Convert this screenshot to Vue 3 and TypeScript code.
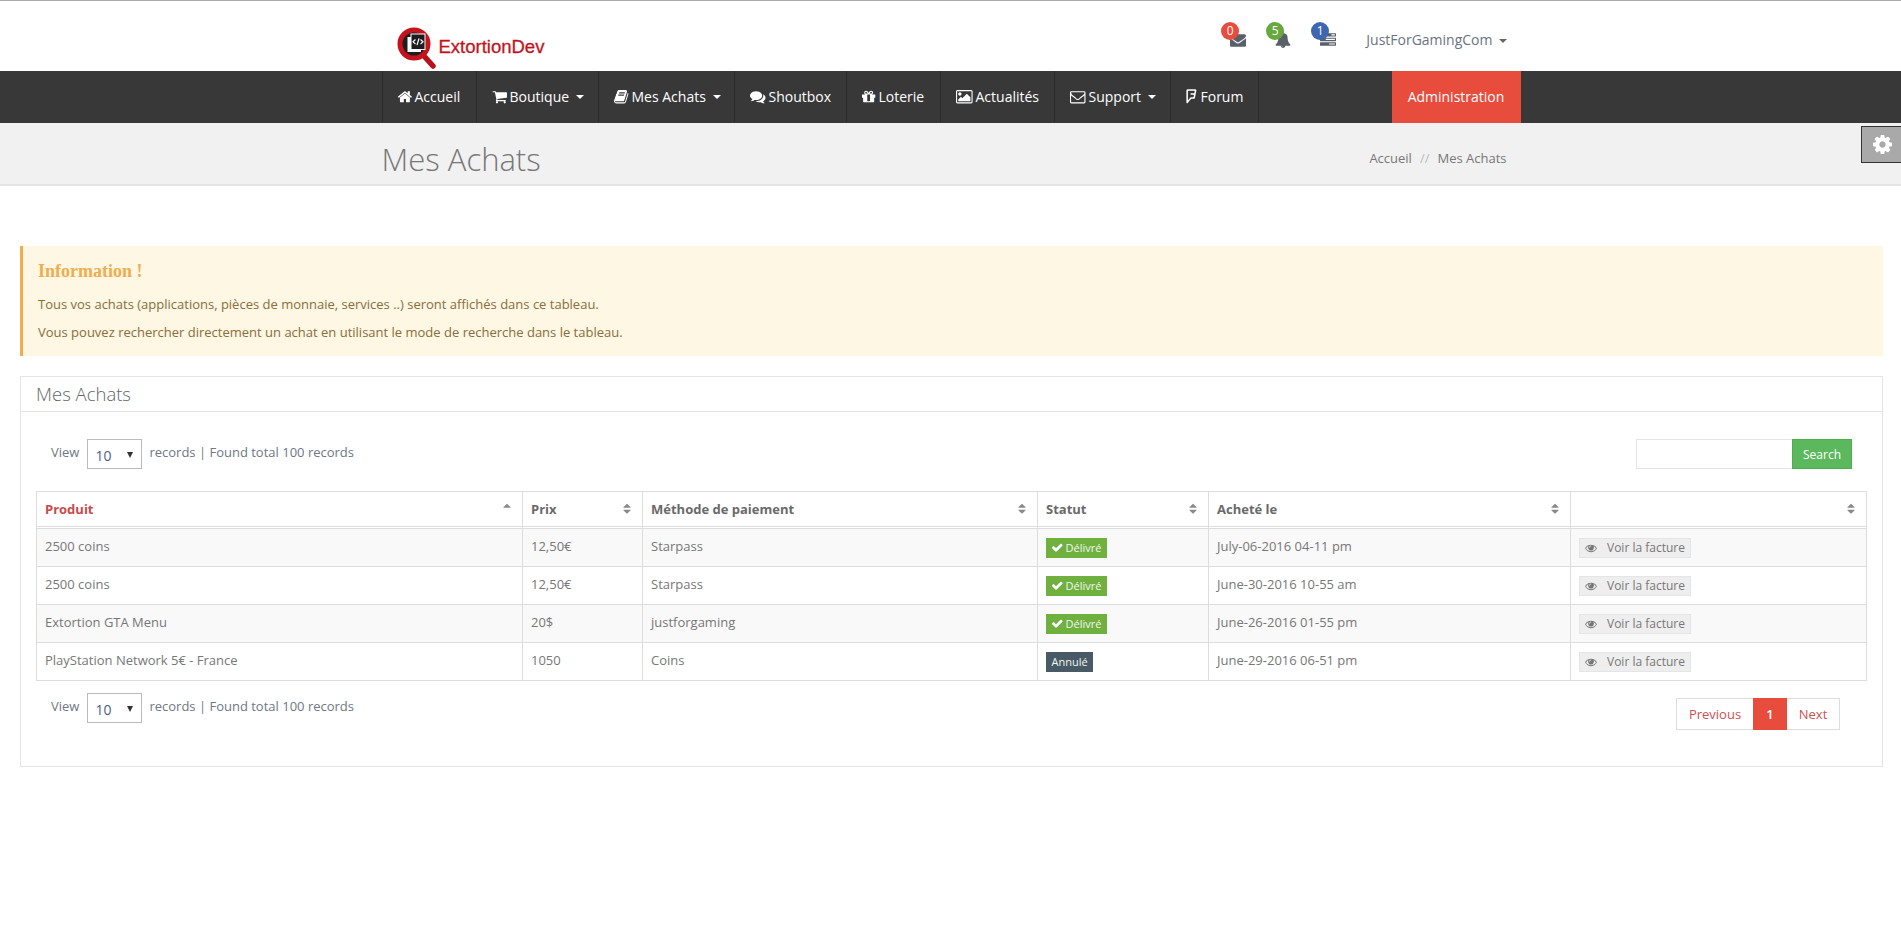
<script setup lang="ts">
const P: Record<string, string> = {
  home: 'M1472 992v480q0 26-19 45t-45 19h-384v-384h-256v384h-384q-26 0-45-19t-19-45v-480q0-1 .5-3t.5-3l575-474 575 474q1 2 1 6zm223-69l-62 74q-8 9-21 11h-3q-13 0-21-7l-692-577-692 577q-12 8-24 7-13-2-21-11l-62-74q-8-10-7-23.500t11-21.500l719-599q32-26 76-26t76 26l244 204v-195q0-14 9-23t23-9h192q14 0 23 9t9 23v408l219 182q10 8 11 21.500t-7 23.500z',
  cart: 'M704 1536q0 52-38 90t-90 38-90-38-38-90 38-90 90-38 90 38 38 90zm896 0q0 52-38 90t-90 38-90-38-38-90 38-90 90-38 90 38 38 90zm128-1088v512q0 24-16.500 42.500t-40.500 21.500l-1044 122q13 60 13 70 0 16-24 64h920q26 0 45 19t19 45-19 45-45 19h-1024q-26 0-45-19t-19-45q0-11 8-31.500t16-36 21.500-40 15.500-29.500l-177-823h-204q-26 0-45-19t-19-45 19-45 45-19h256q16 0 28.500 6.500t19.500 15.500 13 24.500 8 26 5.500 29.500 4.500 26h1201q26 0 45 19t19 45z',
  book: 'M1703 478q40 57 18 129l-275 906q-19 64-76.500 107.500t-122.500 43.500h-923q-77 0-148.500-53.500t-99.500-131.500q-24-67-2-127 0-4 3-27t4-37q1-8-3-21.500t-3-19.500q2-11 8-21t16.500-23.500 16.500-23.500q23-38 45-91.500t30-91.500q3-10 .5-30t-.5-28q3-11 17-28t17-23q21-36 42-92t25-90q1-9-2.500-32t.5-28q4-13 22-30.500t22-22.500q19-26 42.500-84.500t27.500-96.500q1-8-3-25.500t-2-26.500q2-8 9-18t18-23 17-21q8-12 16.500-30.500t15-35 16-36 19.500-32 26.500-23.500 36-11.500 47.500 5.500l-1 3q38-9 51-9h761q74 0 114 56t18 130l-274 906q-36 119-71.500 153.500t-128.500 34.500h-869q-27 0-38 15-11 16-1 43 24 70 144 70h923q29 0 56-15.500t35-41.500l300-987q7-22 5-57 38 15 59 43zm-1064 2q-4 13 2 22.500t20 9.500h608q13 0 25.500-9.500t16.500-22.500l21-64q4-13-2-22.500t-20-9.500h-608q-13 0-25.500 9.500t-16.500 22.500zm-83 256q-4 13 2 22.500t20 9.500h608q13 0 25.500-9.500t16.500-22.500l21-64q4-13-2-22.500t-20-9.500h-608q-13 0-25.500 9.500t-16.500 22.500z',
  comments: 'M1408 768q0 139-94 257t-256.500 186.500-353.500 68.500q-86 0-176-16-124 88-278 128-36 9-86 16h-3q-11 0-20.500-8t-11.500-21q-1-3-1-6.500t.5-6.500 2-6l2.500-5 3.500-5.500 4-5 4.500-5 4-4.500q5-6 23-25t26-29.500 22.500-29 25-38.500 20.500-44q-124-72-195-177t-71-224q0-139 94-257t256.500-186.500 353.500-68.500 353.500 68.500 256.500 186.500 94 257zm384 256q0 120-71 224.500t-195 176.500q10 24 20.500 44t25 38.500 22.500 29 26 29.500 23 25q1 1 4 4.500t4.500 5 4 5 3.500 5.500l2.500 5 2 6 .5 6.500-1 6.500q-3 14-13 22t-22 7q-50-7-86-16-154-40-278-128-90 16-176 16-271 0-472-132 58 4 88 4 161 0 309-45t264-129q125-92 192-212t67-254q0-77-23-152 129 71 204 178t75 230z',
  gift: 'M1056 1356v-716h-320v716q0 25 18 38.500t46 13.500h192q28 0 46-13.500t18-38.500zm-456-844h195l-126-161q-26-31-69-31-40 0-68 28t-28 68 28 68 68 28zm688-96q0-40-28-68t-68-28q-43 0-69 31l-125 161h194q40 0 68-28t28-68zm376 256v320q0 14-9 23t-23 9h-96v416q0 40-28 68t-68 28h-1088q-40 0-68-28t-28-68v-416h-96q-14 0-23-9t-9-23v-320q0-14 9-23t23-9h440q-93 0-158.500-65.500t-65.500-158.500 65.500-158.500 158.500-65.500q107 0 168 77l128 165 128-165q61-77 168-77 93 0 158.500 65.500t65.500 158.500-65.500 158.500-158.500 65.500h440q14 0 23 9t9 23z',
  picture: 'M640 576q0 80-56 136t-136 56-136-56-56-136 56-136 136-56 136 56 56 136zm1024 384v448h-1408v-192l320-320 160 160 512-512zm96-704h-1600q-13 0-22.500 9.500t-9.500 22.500v1216q0 13 9.500 22.500t22.500 9.500h1600q13 0 22.500-9.500t9.500-22.500v-1216q0-13-9.500-22.500t-22.500-9.500zm160 32v1216q0 66-47 113t-113 47h-1600q-66 0-113-47t-47-113v-1216q0-66 47-113t113-47h1600q66 0 113 47t47 113z',
  envo: 'M1664 1504v-768q-32 36-69 66-268 206-426 338-51 43-83 67t-86.500 48.500-102.500 24.500h-2q-48 0-102.500-24.500t-86.500-48.500-83-67q-158-132-426-338-37-30-69-66v768q0 13 9.500 22.500t22.500 9.500h1472q13 0 22.500-9.500t9.500-22.500zm0-1051v-24.500l-.5-13-3-12.500-5.500-9-9-7.500-14-2.500h-1472q-13 0-22.500 9.500t-9.500 22.500q0 168 147 284 193 152 401 317 6 5 35 29.500t46 37.500 44.500 31.500 50.500 27.500 43 9h2q20 0 43-9t50.500-27.500 44.500-31.500 46-37.500 35-29.500q208-165 401-317 54-43 100.500-115.500t46.500-131.500zm128-37v1088q0 66-47 113t-113 47h-1472q-66 0-113-47t-47-113v-1088q0-66 47-113t113-47h1472q66 0 113 47t47 113z',
  foursquare: 'M1258 308l37-194q5-23-9-40t-35-17h-712q-23 0-38.500 17t-15.500 37v1101q0 7 6 1l291-352q23-26 38-33.500t48-7.500h239q22 0 37-14.500t18-29.500q24-130 37-191 4-21-11.500-40t-36.500-19h-294q-29 0-48-19t-19-48v-42q0-29 19-47.500t48-18.500h346q18 0 35-13.500t20-29.500zm227-222q-15 73-53.500 266.500t-69.500 350-35 173.500q-6 22-9 32.500t-14 32.500-24.500 33-38.500 21-58 10h-271q-13 0-22 10-8 9-426 494-22 25-58.500 28.500t-48.500-5.500q-55-22-55-98v-1410q0-55 38-102.500t120-47.500h888q95 0 127 53t10 159z',
  check: 'M1671 566q0 40-28 68l-724 724-136 136q-28 28-68 28t-68-28l-136-136-362-362q-28-28-28-68t28-68l136-136q28-28 68-28t68 28l294 295 656-657q28-28 68-28t68 28l136 136q28 28 28 68z',
  eye: 'M1664 960q-152-236-381-353 61 104 61 225 0 185-131.500 316.500t-316.500 131.500-316.500-131.500-131.500-316.500q0-121 61-225-229 117-381 353 133 205 333.500 326.500t434.500 121.500 434.500-121.500 333.500-326.500zm-720-384q0-20-14-34t-34-14q-125 0-214.500 89.500t-89.500 214.500q0 20 14 34t34 14 34-14 14-34q0-86 61-147t147-61q20 0 34-14t14-34zm848 384q0 34-20 69-140 230-376.500 368.500t-499.500 138.500-499.500-139-376.500-368q-20-35-20-69t20-69q140-229 376.500-368t499.500-139 499.500 139 376.500 369q20 34 20 69z',
  bell: 'M912 1696q0-16-16-16-59 0-101.500-42.500t-42.500-101.500q0-16-16-16t-16 16q0 73 51.500 124.500t124.500 51.500q16 0 16-16zm816-288q0 52-38 90t-90 38h-448q0 106-75 181t-181 75-181-75-75-181h-448q-52 0-90-38t-38-90q50-42 91-88t85-119.500 74.500-158.500 50-206 19.500-260q0-152 117-282.500t307-158.500q-8-19-8-39 0-40 28-68t68-28 68 28 28 68q0 20-8 39 190 28 307 158.500t117 282.500q0 139 19.500 260t50 206 74.500 158.500 85 119.500 91 88z',
  envelope: 'M1792 710v794q0 66-47 113t-113 47h-1472q-66 0-113-47t-47-113v-794q44 49 101 87 362 246 497 345 57 42 92.500 65.500t94.500 48 110 24.500h2q51 0 110-24.500t94.500-48 92.500-65.500q170-123 498-345 57-39 100-87zm0-294q0 79-49 151t-122 123q-376 261-468 325-10 7-42.500 30.500t-54 38-52 32.500-57.500 27-50 9h-2q-23 0-50-9t-57.500-27-52-32.500-54-38-42.500-30.500q-91-64-262-182.500t-205-142.500q-62-42-117-115.500t-55-136.500q0-78 41.500-130t118.500-52h1472q65 0 112.500 47t47.500 113z',
  tasks: 'M1024 1408h640v-128h-640v128zm-384-512h1024v-128h-1024v128zm640-512h384v-128h-384v128zm512 832v256q0 26-19 45t-45 19h-1664q-26 0-45-19t-19-45v-256q0-26 19-45t45-19h1664q26 0 45 19t19 45zm0-512v256q0 26-19 45t-45 19h-1664q-26 0-45-19t-19-45v-256q0-26 19-45t45-19h1664q26 0 45 19t19 45zm0-512v256q0 26-19 45t-45 19h-1664q-26 0-45-19t-19-45v-256q0-26 19-45t45-19h1664q26 0 45 19t19 45z',
  gear: 'M1152 896q0-106-75-181t-181-75-181 75-75 181 75 181 181 75 181-75 75-181zm512-109v222q0 12-8 23t-20 13l-185 28q-19 54-39 91 35 50 107 138 10 12 10 25t-9 23q-27 37-99 108t-94 71q-12 0-26-9l-138-108q-44 23-91 38-16 136-29 186-7 28-36 28h-222q-14 0-24.500-8.500t-11.500-21.500l-28-184q-49-16-90-37l-141 107q-10 9-25 9-14 0-25-11-126-114-165-168-7-10-7-23 0-12 8-23 15-21 51-66.500t54-70.500q-27-50-41-99l-183-27q-13-2-21-12.500t-8-23.500v-222q0-12 8-23t19-13l186-28q14-46 39-92-40-57-107-138-10-12-10-24 0-10 9-23 26-36 98.500-107.500t94.500-71.500q13 0 26 10l138 107q44-23 91-38 16-136 29-186 7-28 36-28h222q14 0 24.500 8.500t11.500 21.500l28 184q49 16 90 37l142-107q9-9 24-9 13 0 25 10 129 119 165 170 7 8 7 22 0 12-8 23-15 21-51 66.500t-54 70.500q26 50 41 98l183 28q13 2 21 12.500t8 23.500z',
  sort: 'M1408 1088q0 26-19 45l-448 448q-19 19-45 19t-45-19l-448-448q-19-19-19-45t19-45 45-19h896q26 0 45 19t19 45zm0-384q0 26-19 45t-45 19h-896q-26 0-45-19t-19-45 19-45l448-448q19-19 45-19t45 19l448 448q19 19 19 45z',
  sortAsc: 'M1408 704q0 26-19 45t-45 19h-896q-26 0-45-19t-19-45 19-45l448-448q19-19 45-19t45 19l448 448q19 19 19 45z'
}

interface NavItem { label: string; icon: string; caret?: boolean; vb: string; slot: number; width: number }
const navItems: NavItem[] = [
  { label: 'Accueil', icon: 'home', vb: '96 0 1792 1792', slot: 17, width: 94 },
  { label: 'Boutique', icon: 'cart', caret: true, vb: '0 0 1792 1792', slot: 18, width: 122 },
  { label: 'Mes Achats', icon: 'book', caret: true, vb: '64 0 1792 1792', slot: 18, width: 136 },
  { label: 'Shoutbox', icon: 'comments', vb: '0 0 1792 1792', slot: 19, width: 112 },
  { label: 'Loterie', icon: 'gift', vb: '128 0 1792 1792', slot: 17, width: 94 },
  { label: 'Actualités', icon: 'picture', vb: '0 0 1920 1792', slot: 20, width: 114 },
  { label: 'Support', icon: 'envo', caret: true, vb: '0 0 1792 1792', slot: 19, width: 116 },
  { label: 'Forum', icon: 'foursquare', vb: '256 -128 1792 1792', slot: 15, width: 88 }
]

const notifications = [
  { count: 0, color: 'red', icon: 'envelope' },
  { count: 5, color: 'green', icon: 'bell' },
  { count: 1, color: 'blue', icon: 'tasks' }
]

const columns = [
  { label: 'Produit', width: 487, active: true },
  { label: 'Prix', width: 120 },
  { label: 'Méthode de paiement', width: 395 },
  { label: 'Statut', width: 171 },
  { label: 'Acheté le', width: 362 },
  { label: '', width: 296 }
]

const rows = [
  { name: '2500 coins', price: '12,50€', method: 'Starpass', ok: true, date: 'July-06-2016 04-11 pm' },
  { name: '2500 coins', price: '12,50€', method: 'Starpass', ok: true, date: 'June-30-2016 10-55 am' },
  { name: 'Extortion GTA Menu', price: '20$', method: 'justforgaming', ok: true, date: 'June-26-2016 01-55 pm' },
  { name: 'PlayStation Network 5€ - France', price: '1050', method: 'Coins', ok: false, date: 'June-29-2016 06-51 pm' }
]
</script>

<template>
  <div class="page">
    <header class="top">
      <div class="wrap top-inner">
        <div class="logo">
          <svg class="logo-mark" viewBox="0 0 42 42" width="42" height="42">
            <path d="M27 29l9 10" stroke="#b5121b" stroke-width="5.500" stroke-linecap="round" fill="none" />
            <circle cx="17" cy="17" r="14" fill="#1d1d1f" stroke="#c5121c" stroke-width="5" />
            <rect x="10.500" y="10" width="13.500" height="15" fill="#fff" />
            <rect x="14" y="7" width="14" height="15.500" fill="#1d1d1f" stroke="#fff" stroke-width="1" />
            <path d="M18.500 12.500l-2.500 2.300 2.500 2.300M23.500 12.500l2.500 2.300-2.500 2.300M22 11.500l-2 6.600" stroke="#fff" stroke-width="1.200" fill="none" />
          </svg>
          <span class="logo-text">ExtortionDev</span>
        </div>
        <div class="top-right">
          <div v-for="n in notifications" :key="n.icon" class="notif">
            <svg class="notif-icon" viewBox="0 0 1792 1792"><path :d="P[n.icon]" /></svg>
            <span class="bubble" :class="n.color">{{ n.count }}</span>
          </div>
          <div class="user">JustForGamingCom<i class="caret dark"></i></div>
        </div>
      </div>
    </header>

    <nav class="nav">
      <div class="wrap nav-inner">
        <ul class="menu">
          <li v-for="item in navItems" :key="item.label" class="menu-item" :style="{ width: item.width + 'px' }">
            <span class="icon-slot" :style="{ width: item.slot + 'px' }">
              <svg class="nav-icon" :viewBox="item.vb" preserveAspectRatio="xMinYMid meet"><path :d="P[item.icon]" /></svg>
            </span>
            <span>{{ item.label }}</span>
            <i v-if="item.caret" class="caret"></i>
          </li>
        </ul>
        <a class="admin">Administration</a>
      </div>
    </nav>

    <section class="title-band">
      <div class="wrap title-inner">
        <h1>Mes Achats</h1>
        <div class="crumbs"><span>Accueil</span><em>//</em><span>Mes Achats</span></div>
      </div>
      <div class="settings">
        <svg viewBox="128 128 1536 1536"><path :d="P.gear" /></svg>
      </div>
    </section>

    <main class="content">
      <div class="alert">
        <h4>Information !</h4>
        <p>Tous vos achats (applications, pièces de monnaie, services ..) seront affichés dans ce tableau.</p>
        <p>Vous pouvez rechercher directement un achat en utilisant le mode de recherche dans le tableau.</p>
      </div>

      <div class="panel">
        <div class="panel-head">Mes Achats</div>
        <div class="panel-body">
          <div class="toolbar">
            <div class="lengths">
              <span>View</span>
              <span class="select-wrap"><select class="select"><option>10</option></select></span>
              <span>records | Found total 100 records</span>
            </div>
            <div class="search">
              <input class="search-input" type="text" />
              <button class="search-btn">Search</button>
            </div>
          </div>

          <table class="table">
            <colgroup>
              <col v-for="c in columns" :key="c.label" :style="{ width: c.width + 'px' }" />
            </colgroup>
            <thead>
              <tr>
                <th v-for="c in columns" :key="c.label" :class="{ active: c.active }">
                  <div class="th-inner">
                    <span>{{ c.label }}</span>
                    <svg class="sort" viewBox="320 128 1152 1536"><path :d="c.active ? P.sortAsc : P.sort" /></svg>
                  </div>
                </th>
              </tr>
            </thead>
            <tbody>
              <tr v-for="(r, i) in rows" :key="i">
                <td>{{ r.name }}</td>
                <td>{{ r.price }}</td>
                <td>{{ r.method }}</td>
                <td>
                  <span v-if="r.ok" class="label ok">
                    <svg viewBox="128 256 1600 1280"><path :d="P.check" /></svg>Délivré
                  </span>
                  <span v-else class="label ko">Annulé</span>
                </td>
                <td>{{ r.date }}</td>
                <td>
                  <a class="bill">
                    <svg viewBox="0 128 1792 1536"><path :d="P.eye" /></svg>Voir la facture
                  </a>
                </td>
              </tr>
            </tbody>
          </table>

          <div class="foot">
            <div class="lengths">
              <span>View</span>
              <span class="select-wrap"><select class="select"><option>10</option></select></span>
              <span>records | Found total 100 records</span>
            </div>
            <div class="pager">
              <a class="prev">Previous</a>
              <a class="current">1</a>
              <a class="next">Next</a>
            </div>
          </div>
        </div>
      </div>
    </main>
  </div>
</template>

<style>
html, body { margin: 0; background: #fff; }
</style>

<style scoped>
.page { font-family: "Open Sans", "Liberation Sans", sans-serif; font-size: 13px; color: #777; min-height: 949px; background: #fff; }
.wrap { width: 1140px; margin: 0 auto; padding: 0 0 0 1px; box-sizing: border-box; }

.top { height: 70px; border-top: 1px solid #aaa; box-sizing: content-box; }
.top-inner { display: flex; justify-content: space-between; height: 70px; position: relative; }
.logo { display: flex; align-items: flex-start; padding: 26px 0 0 15px; }
.logo-mark { display: block; flex: none; }
.logo-text { font-family: "Liberation Sans", Arial, sans-serif; font-size: 18.500px; color: #c3141d; -webkit-text-stroke: 0.3px #c3141d; margin: 8px 0 0 0; line-height: 24px; }
.top-right { display: flex; align-items: flex-start; padding-right: 14px; }
.notif { position: relative; width: 16px; height: 16px; margin-top: 31px; margin-right: 29px; }
.notif-icon { display: block; width: 16px; height: 16px; fill: #5a6068; }
.bubble { position: absolute; left: -9px; top: -10px; width: 18px; height: 18px; border-radius: 50%; color: #fff; font-size: 12px; line-height: 18px; text-align: center; }
.bubble.red { background: #e74c3c; }
.bubble.green { background: #69a83f; }
.bubble.blue { background: #3f67b1; }
.user { font-size: 14px; color: #6b7280; margin: 29px 0 0 1px; line-height: 20px; white-space: nowrap; }

.caret { display: inline-block; width: 0; height: 0; margin-left: 6px; vertical-align: middle; border-top: 4px solid #fff; border-left: 4px solid transparent; border-right: 4px solid transparent; }
.caret.dark { border-top-color: #666; }

.nav { background: #383838; height: 52px; }
.nav-inner { display: flex; height: 52px; position: relative; }
.menu { display: flex; list-style: none; margin: 0; padding: 0; height: 51px; border-right: 1px solid #2b2b2b; }
.menu-item { display: flex; align-items: center; box-sizing: border-box; padding-left: 15px; border-left: 1px solid #2b2b2b; color: #fff; font-size: 14px; white-space: nowrap; }
.menu-item .caret { margin-left: 7px; }
.icon-slot { display: block; flex: none; height: 15.500px; }
.nav-icon { display: block; width: 100%; height: 15.500px; fill: #fff; overflow: visible; }
.admin { margin-left: auto; width: 129px; background: #e74c3c; color: #fff; font-size: 14px; line-height: 52px; text-align: center; }

.title-band { height: 61px; background: #f1f1f1; border-bottom: 2px solid #e5e5e5; position: relative; }
.title-inner { display: flex; justify-content: space-between; align-items: center; height: 61px; padding-right: 14px; }
.title-band h1 { margin: 0; font-weight: 300; font-size: 31px; line-height: 40px; color: #777; padding-top: 10px; }
.crumbs { display: flex; gap: 8px; color: #777; font-size: 13px; padding-top: 9px; }
.crumbs em { font-style: normal; color: #bbb; }
.settings { position: absolute; top: 3px; right: 0; width: 39px; height: 35px; box-sizing: content-box; background: #a9a9a9; border: 1px solid #333; border-right: 0; display: flex; align-items: center; justify-content: center; }
.settings svg { width: 19px; height: 19px; fill: #fff; margin-left: 2px; }

.content { padding: 60px 18px 0 20px; }
.alert { height: 110px; box-sizing: border-box; background: #fdf7e3; border-left: 3px solid #f0ad4e; padding: 15px 0 0 15px; color: #8a6d3b; }
.alert h4 { margin: 0 0 14px; font-family: "Liberation Serif", "Times New Roman", serif; font-size: 18px; font-weight: 700; line-height: 20px; color: #f0ad4e; }
.alert p { margin: 0 0 10px; line-height: 18px; font-size: 13px; }

.panel { margin-top: 20px; border: 1px solid #e5e5e5; height: 391px; box-sizing: border-box; }
.panel-head { height: 35px; box-sizing: border-box; border-bottom: 1px solid #e5e5e5; padding-left: 15px; font-size: 18.500px; font-weight: 300; line-height: 34px; color: #666; }
.panel-body { padding: 27px 15px 0; }

.toolbar { display: flex; justify-content: space-between; padding: 0 15px 0 15px; height: 30px; margin-bottom: 22px; }
.lengths { display: flex; align-items: flex-start; gap: 7px; color: #6f7782; line-height: 26px; }
.select-wrap { position: relative; display: block; width: 55px; height: 30px; margin-left: 1px; }
.select-wrap::after { content: ""; position: absolute; right: 9px; top: 13px; border-top: 6px solid #333; border-left: 3px solid transparent; border-right: 3px solid transparent; pointer-events: none; }
.select { appearance: none; width: 55px; height: 30px; box-sizing: border-box; border: 1px solid #bbb; background: #fff; padding: 2px 0 0 7px; font-family: inherit; font-size: 14px; color: #4f5d85; border-radius: 0; margin: 0; display: block; }
.search { display: flex; }
.search-input { width: 156px; height: 30px; box-sizing: border-box; border: 1px solid #e5e5e5; border-right: 0; background: #fff; padding: 0; margin: 0; border-radius: 0; }
.search-btn { width: 60px; height: 30px; box-sizing: border-box; border: 1px solid #4cae4c; background: #5cb85c; color: #fff; font-family: inherit; font-size: 12px; padding: 0; border-radius: 0; }

.table { width: 1831px; table-layout: fixed; border-collapse: separate; border-spacing: 0; }
th, td { border-right: 1px solid #ddd; padding: 0 7px 0 8px; text-align: left; box-sizing: border-box; }
th:first-child, td:first-child { border-left: 1px solid #ddd; }
th { border-top: 1px solid #ddd; border-bottom: 3px double #ddd; height: 38px; font-weight: 700; font-size: 13px; color: #6a6a6a; }
th.active { color: #c94a4c; }
.th-inner { display: flex; align-items: center; justify-content: space-between; padding-right: 4px; padding-bottom: 1px; }
.sort { width: 8px; height: 11.500px; fill: #8a8a8a; flex: none; overflow: visible; }
td { height: 38px; border-bottom: 1px solid #ddd; font-size: 13px; color: #777; padding-bottom: 4px; }
tbody tr:nth-child(odd) td { background: #f9f9f9; }
.label { display: inline-flex; align-items: center; height: 20px; margin-top: 4px; padding: 0 5.500px; font-size: 11px; color: #f3f6ee; vertical-align: middle; }
.label svg { width: 11px; height: 9px; fill: #fff; margin-right: 3px; }
.label.ok { background: #6fb03f; }
.label.ko { background: #485a66; }
.bill { display: inline-flex; align-items: center; height: 20px; margin-top: 4px; box-sizing: border-box; padding: 0 5px; background: #eee; border: 1px solid #e5e5e5; font-size: 12px; color: #777; vertical-align: middle; }
.bill svg { width: 12px; height: 10px; fill: #777; margin-right: 10px; }

.foot { display: flex; justify-content: space-between; padding: 12px 27px 0 15px; }
.pager { display: flex; margin-top: 5px; height: 32px; box-sizing: border-box; border: 1px solid #ddd; }
.pager a { display: block; line-height: 30px; color: #cf5053; font-size: 13px; text-align: center; box-sizing: border-box; }
.pager a.prev { width: 76px; }
.pager a.next { width: 52px; }
.pager a.current { background: #e74c3c; color: #fff; font-weight: 600; margin: -1px 0; line-height: 32px; width: 34px; }
</style>
